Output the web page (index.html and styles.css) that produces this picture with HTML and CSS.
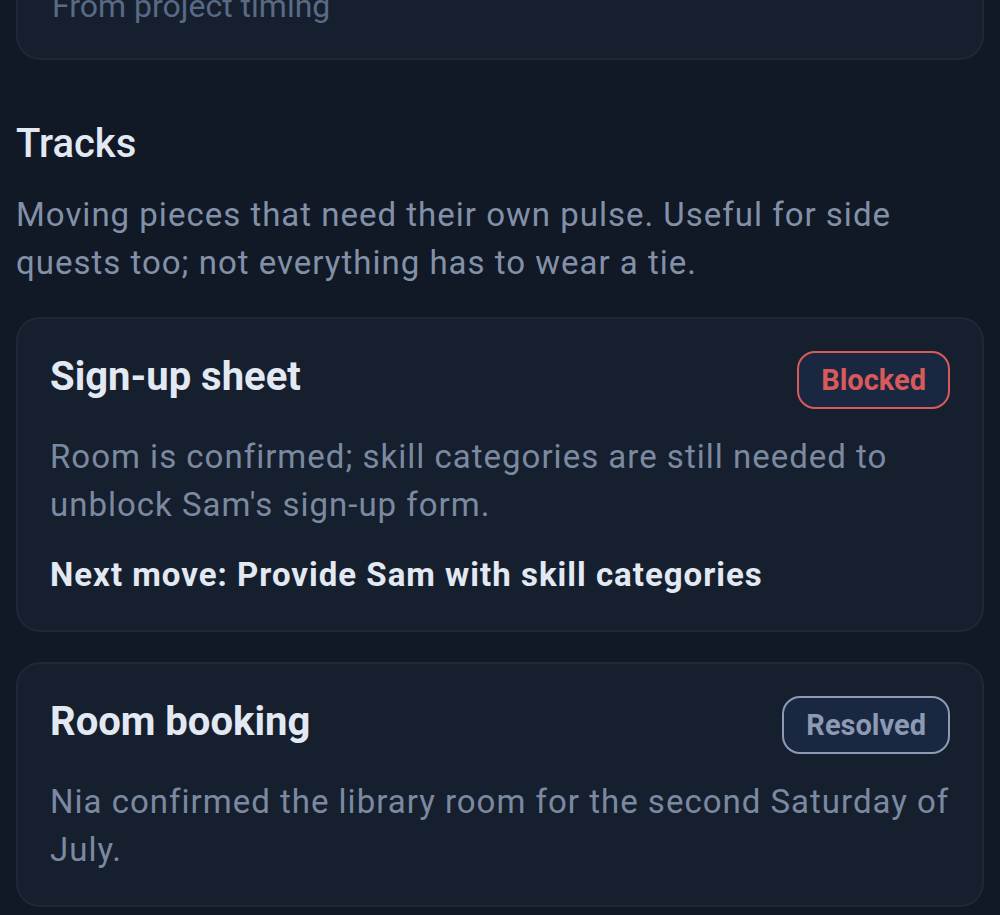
FILE: index.html
```html
<!DOCTYPE html>
<html lang="en">
<head>
<meta charset="utf-8">
<title>Tracks</title>
<link rel="stylesheet" href="styles.css">
</head>
<body>
  <main class="page">
    <div class="card card--summary">
      <p class="card__meta">From project timing</p>
    </div>

    <section class="tracks">
      <h2 class="tracks__title">Tracks</h2>
      <p class="tracks__intro">Moving pieces that need their own pulse. Useful for side quests too; not everything has to wear a tie.</p>

      <div class="tracks__list">
        <article class="card track">
          <header class="track__head">
            <h3 class="track__name">Sign-up sheet</h3>
            <span class="badge badge--blocked">Blocked</span>
          </header>
          <p class="track__desc">Room is confirmed; skill categories are still needed to unblock Sam's sign-up form.</p>
          <p class="track__next">Next move: Provide Sam with skill categories</p>
        </article>

        <article class="card track">
          <header class="track__head">
            <h3 class="track__name">Room booking</h3>
            <span class="badge badge--resolved">Resolved</span>
          </header>
          <p class="track__desc">Nia confirmed the library room for the second Saturday of July.</p>
        </article>
      </div>
    </section>
  </main>
</body>
</html>
```

FILE: styles.css
```css
* {
  box-sizing: border-box;
}

html,
body {
  margin: 0;
  padding: 0;
  background: #111826;
}

body {
  font-family: Roboto, "Liberation Sans", sans-serif;
  color: #e3e9f3;
  overflow: hidden;
}

.page {
  padding: 0 16px;
}

.card {
  background: #161f2e;
  border: 2px solid #1e2838;
  border-radius: 24px;
}

/* summary card scrolled mostly out of view */
.card--summary {
  margin-top: -52px;
  padding: 32px 34px 28px;
}

.card__meta {
  margin: 0;
  font-size: 32px;
  line-height: 48px;
  color: #596a84;
}

.tracks {
  margin-top: 62px;
}

.tracks__title {
  margin: 0;
  font-size: 40px;
  line-height: 44px;
  font-weight: 500;
  color: #e3e9f3;
}

.tracks__intro {
  margin: 25px 0 0;
  font-size: 33px;
  line-height: 48px;
  letter-spacing: 1px;
  color: #8391a8;
}

.tracks__list {
  margin-top: 30px;
  display: flex;
  flex-direction: column;
  gap: 30px;
}

.track {
  padding: 32px 32px 31px;
}

.track__head {
  display: flex;
  align-items: flex-start;
  justify-content: space-between;
  gap: 24px;
}

.track__name {
  margin: 0;
  font-size: 40px;
  line-height: 52px;
  font-weight: 700;
  color: #e3e9f3;
}

.badge {
  display: inline-flex;
  align-items: center;
  height: 58px;
  padding: 0 22px;
  border: 2px solid;
  border-radius: 18px;
  background: #1a2741;
  font-size: 29px;
  font-weight: 700;
}

.badge--blocked {
  color: #d95a5a;
  border-color: #d95a5a;
}

.badge--resolved {
  color: #8c9ab3;
  border-color: #8c9ab3;
}

.track__desc {
  margin: 24px 0 0;
  font-size: 33px;
  line-height: 48px;
  letter-spacing: 1px;
  color: #7b89a1;
}

.track__next {
  margin: 22px 0 0;
  font-size: 33px;
  line-height: 48px;
  letter-spacing: 1px;
  font-weight: 700;
  color: #e3e9f3;
}
```
